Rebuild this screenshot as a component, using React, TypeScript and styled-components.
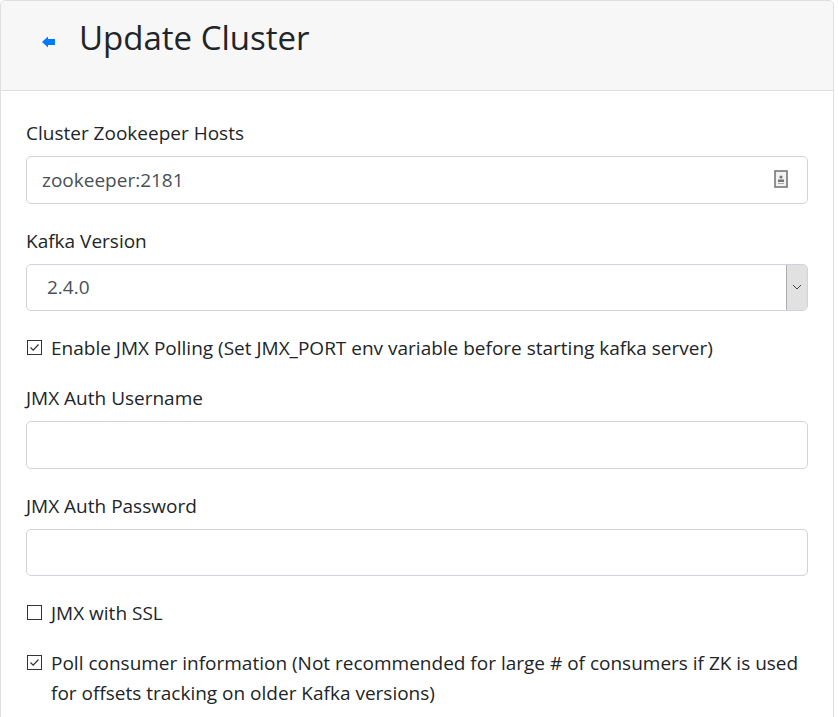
import React from "react";
import styled, { createGlobalStyle } from "styled-components";

const FONT = `"Open Sans", "Noto Sans", sans-serif`;

const Global = createGlobalStyle`
  html, body { margin: 0; padding: 0; background: #fff; }
  body { font-family: ${FONT}; color: #212529; }
  * { box-sizing: border-box; }
`;

const Page = styled.div`
  width: 834px;
`;

const Card = styled.div`
  border: 1px solid #dfdfdf;
  border-radius: 5px;
  background: #fff;
`;

const Header = styled.div`
  display: flex;
  align-items: flex-start;
  height: 90px;
  padding: 17px 25px 0;
  background: #f7f7f7;
  border-bottom: 1px solid #dfdfdf;
  border-radius: 5px 5px 0 0;
`;

const BackLink = styled.a`
  display: flex;
  align-items: center;
  width: 53px;
  height: 48px;
  padding-left: 16px;
  color: #007bff;
`;

const Title = styled.h1`
  margin: 0;
  font-size: 33px;
  font-weight: 400;
  line-height: 40px;
  color: #212529;
`;

const Body = styled.div`
  padding: 25px;
`;

const Group = styled.div<{ $check?: boolean }>`
  margin-bottom: ${(p) => (p.$check ? "18px" : "20px")};
`;

const Label = styled.label`
  display: block;
  margin-bottom: 8px;
  padding-top: 2px;
  font-size: 19px;
  line-height: 30px;
`;

const InputWrap = styled.div`
  position: relative;
`;

const Input = styled.input`
  display: block;
  width: 100%;
  height: 47.5px;
  padding: 0 15px;
  font-family: ${FONT};
  font-size: 19px;
  color: #495057;
  background: #fff;
  border: 1px solid #ced4da;
  border-radius: 5px;
  outline: none;
`;

const FieldIcon = styled.span`
  position: absolute;
  right: 20px;
  top: 14px;
  display: flex;
`;

const SelectBox = styled.div`
  display: flex;
  height: 47.5px;
  border: 1px solid #ced4da;
  border-radius: 5px;
  overflow: hidden;
`;

const SelectValue = styled.div`
  flex: 1;
  display: flex;
  align-items: center;
  padding: 0 20px;
  font-size: 19px;
  color: #495057;
`;

const SelectButton = styled.div`
  width: 21px;
  display: flex;
  align-items: center;
  justify-content: center;
  background: #e1e1e1;
  border-left: 1px solid #adadad;
`;

const CheckRow = styled.label`
  display: flex;
  align-items: flex-start;
  padding-top: 2px;
  font-size: 19px;
  line-height: 30px;
`;

const Box = styled.span`
  flex: none;
  width: 15px;
  height: 15px;
  margin: 7px 9px 0 1px;
  border: 1px solid #333;
  background: #fff;
  display: flex;
  align-items: center;
  justify-content: center;
`;

const Check = ({ checked }: { checked: boolean }) => (
  <Box>
    {checked && (
      <svg width="11" height="11" viewBox="0 0 11 11">
        <path d="M1.5 5.5 L4.2 8.2 L9.5 2.5" fill="none" stroke="#333" strokeWidth="1.2" />
      </svg>
    )}
  </Box>
);

const Arrow = () => (
  <svg width="13" height="12" viewBox="0 0 13 12">
    <path d="M0 6 L6 0.5 L6 3 L13 3 L13 9 L6 9 L6 11.5 Z" fill="#007bff" />
  </svg>
);

const ContactIcon = () => (
  <svg width="14" height="18" viewBox="0 0 14 18">
    <rect x="1" y="1" width="12" height="16" fill="#f2f2f2" stroke="#777" strokeWidth="1.6" />
    <circle cx="7" cy="7" r="1.6" fill="#777" />
    <rect x="4" y="9.5" width="6" height="2.5" fill="#777" />
    <rect x="4" y="13" width="6" height="1" fill="#aaa" />
  </svg>
);

const Chevron = () => (
  <svg width="10" height="6" viewBox="0 0 10 6">
    <path d="M1 1 L5 5 L9 1" fill="none" stroke="#444" strokeWidth="1" />
  </svg>
);

export default function App() {
  return (
    <Page>
      <Global />
      <Card>
        <Header>
          <BackLink href="#">
            <Arrow />
          </BackLink>
          <Title>Update Cluster</Title>
        </Header>
        <Body>
          <Group>
            <Label>Cluster Zookeeper Hosts</Label>
            <InputWrap>
              <Input defaultValue="zookeeper:2181" />
              <FieldIcon>
                <ContactIcon />
              </FieldIcon>
            </InputWrap>
          </Group>
          <Group>
            <Label>Kafka Version</Label>
            <SelectBox>
              <SelectValue>2.4.0</SelectValue>
              <SelectButton>
                <Chevron />
              </SelectButton>
            </SelectBox>
          </Group>
          <Group $check>
            <CheckRow>
              <Check checked />
              <span>Enable JMX Polling (Set JMX_PORT env variable before starting kafka server)</span>
            </CheckRow>
          </Group>
          <Group>
            <Label>JMX Auth Username</Label>
            <Input />
          </Group>
          <Group>
            <Label>JMX Auth Password</Label>
            <Input type="password" />
          </Group>
          <Group $check>
            <CheckRow>
              <Check checked={false} />
              <span>JMX with SSL</span>
            </CheckRow>
          </Group>
          <Group $check>
            <CheckRow>
              <Check checked />
              <span>
                Poll consumer information (Not recommended for large # of consumers if ZK is used for
                offsets tracking on older Kafka versions)
              </span>
            </CheckRow>
          </Group>
        </Body>
      </Card>
    </Page>
  );
}
